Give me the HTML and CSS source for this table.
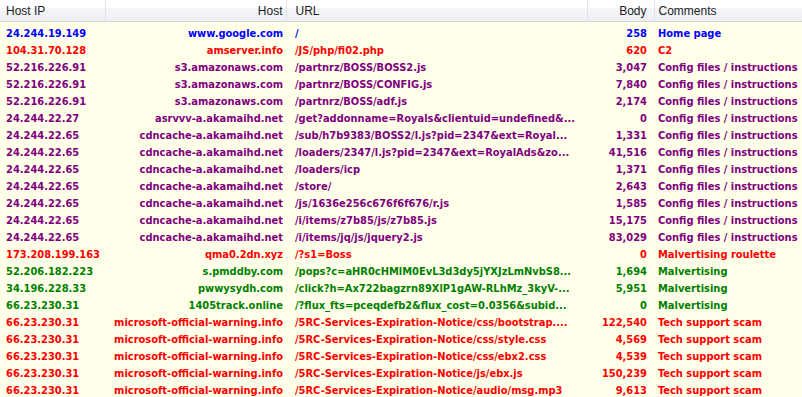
FILE: index.html
```html
<!DOCTYPE html>
<html>
<head>
<meta charset="utf-8">
<link rel="stylesheet" href="styles.css">
</head>
<body>
<table class="sessions">
<colgroup>
<col class="c-ip"><col class="c-host"><col class="c-url"><col class="c-body"><col class="c-com">
</colgroup>
<thead>
<tr><th class="ip">Host IP</th><th class="host">Host</th><th class="url">URL</th><th class="body">Body</th><th class="com">Comments</th></tr>
</thead>
<tbody>
<tr class="blue"><td class="ip">24.244.19.149</td><td class="host">www.google.com</td><td class="url">/</td><td class="body">258</td><td class="com">Home page</td></tr>
<tr class="red"><td class="ip">104.31.70.128</td><td class="host">amserver.info</td><td class="url">/JS/php/fi02.php</td><td class="body">620</td><td class="com">C2</td></tr>
<tr class="purple"><td class="ip">52.216.226.91</td><td class="host">s3.amazonaws.com</td><td class="url">/partnrz/BOSS/BOSS2.js</td><td class="body">3,047</td><td class="com">Config files / instructions</td></tr>
<tr class="purple"><td class="ip">52.216.226.91</td><td class="host">s3.amazonaws.com</td><td class="url">/partnrz/BOSS/CONFIG.js</td><td class="body">7,840</td><td class="com">Config files / instructions</td></tr>
<tr class="purple"><td class="ip">52.216.226.91</td><td class="host">s3.amazonaws.com</td><td class="url">/partnrz/BOSS/adf.js</td><td class="body">2,174</td><td class="com">Config files / instructions</td></tr>
<tr class="purple"><td class="ip">24.244.22.27</td><td class="host">asrvvv-a.akamaihd.net</td><td class="url">/get?addonname=Royals&amp;clientuid=undefined&amp;...</td><td class="body">0</td><td class="com">Config files / instructions</td></tr>
<tr class="purple"><td class="ip">24.244.22.65</td><td class="host">cdncache-a.akamaihd.net</td><td class="url">/sub/h7b9383/BOSS2/l.js?pid=2347&amp;ext=Royal...</td><td class="body">1,331</td><td class="com">Config files / instructions</td></tr>
<tr class="purple"><td class="ip">24.244.22.65</td><td class="host">cdncache-a.akamaihd.net</td><td class="url">/loaders/2347/l.js?pid=2347&amp;ext=RoyalAds&amp;zo...</td><td class="body">41,516</td><td class="com">Config files / instructions</td></tr>
<tr class="purple"><td class="ip">24.244.22.65</td><td class="host">cdncache-a.akamaihd.net</td><td class="url">/loaders/icp</td><td class="body">1,371</td><td class="com">Config files / instructions</td></tr>
<tr class="purple"><td class="ip">24.244.22.65</td><td class="host">cdncache-a.akamaihd.net</td><td class="url">/store/</td><td class="body">2,643</td><td class="com">Config files / instructions</td></tr>
<tr class="purple"><td class="ip">24.244.22.65</td><td class="host">cdncache-a.akamaihd.net</td><td class="url">/js/1636e256c676f6f676/r.js</td><td class="body">1,585</td><td class="com">Config files / instructions</td></tr>
<tr class="purple"><td class="ip">24.244.22.65</td><td class="host">cdncache-a.akamaihd.net</td><td class="url">/i/items/z7b85/js/z7b85.js</td><td class="body">15,175</td><td class="com">Config files / instructions</td></tr>
<tr class="purple"><td class="ip">24.244.22.65</td><td class="host">cdncache-a.akamaihd.net</td><td class="url">/i/items/jq/js/jquery2.js</td><td class="body">83,029</td><td class="com">Config files / instructions</td></tr>
<tr class="red"><td class="ip">173.208.199.163</td><td class="host">qma0.2dn.xyz</td><td class="url">/?s1=Boss</td><td class="body">0</td><td class="com">Malvertising roulette</td></tr>
<tr class="green"><td class="ip">52.206.182.223</td><td class="host">s.pmddby.com</td><td class="url">/pops?c=aHR0cHMlM0EvL3d3dy5jYXJzLmNvbS8...</td><td class="body">1,694</td><td class="com">Malvertising</td></tr>
<tr class="green"><td class="ip">34.196.228.33</td><td class="host">pwwysydh.com</td><td class="url">/click?h=Ax722bagzrn89XlP1gAW-RLhMz_3kyV-...</td><td class="body">5,951</td><td class="com">Malvertising</td></tr>
<tr class="green"><td class="ip">66.23.230.31</td><td class="host">1405track.online</td><td class="url">/?flux_fts=pceqdefb2&amp;flux_cost=0.0356&amp;subid...</td><td class="body">0</td><td class="com">Malvertising</td></tr>
<tr class="red"><td class="ip">66.23.230.31</td><td class="host">microsoft-official-warning.info</td><td class="url">/5RC-Services-Expiration-Notice/css/bootstrap....</td><td class="body">122,540</td><td class="com">Tech support scam</td></tr>
<tr class="red"><td class="ip">66.23.230.31</td><td class="host">microsoft-official-warning.info</td><td class="url">/5RC-Services-Expiration-Notice/css/style.css</td><td class="body">4,569</td><td class="com">Tech support scam</td></tr>
<tr class="red"><td class="ip">66.23.230.31</td><td class="host">microsoft-official-warning.info</td><td class="url">/5RC-Services-Expiration-Notice/css/ebx2.css</td><td class="body">4,539</td><td class="com">Tech support scam</td></tr>
<tr class="red"><td class="ip">66.23.230.31</td><td class="host">microsoft-official-warning.info</td><td class="url">/5RC-Services-Expiration-Notice/js/ebx.js</td><td class="body">150,239</td><td class="com">Tech support scam</td></tr>
<tr class="red"><td class="ip">66.23.230.31</td><td class="host">microsoft-official-warning.info</td><td class="url">/5RC-Services-Expiration-Notice/audio/msg.mp3</td><td class="body">9,613</td><td class="com">Tech support scam</td></tr>
</tbody>
</table>
</body>
</html>
```
FILE: styles.css
```css
html, body {
  margin: 0;
  padding: 0;
  background: #ffffea;
  overflow: hidden;
}
.sessions {
  width: 802px;
  table-layout: fixed;
  border-collapse: collapse;
  border-spacing: 0;
}
.c-ip { width: 105px; }
.c-host { width: 181px; }
.c-url { width: 301px; }
.c-body { width: 67px; }
.c-com { width: 148px; }
.sessions th {
  height: 18px;
  padding: 0 0 3px 0;
  font-family: "Liberation Sans", Arial, sans-serif;
  font-size: 12px;
  font-weight: normal;
  color: #1e1e1e;
  background: linear-gradient(#ffffff 0, #ffffff 8px, #f4f5f8 8px, #eff0f4 21px);
  border-bottom: 1px solid #d4d6dc;
  border-right: 1px solid #e1e3e8;
  white-space: nowrap;
  overflow: hidden;
  vertical-align: bottom;
  line-height: 14px;
}
.sessions th:last-child { border-right: none; }
.sessions td {
  height: 11px;
  padding: 6px 0 0 0;
  font-family: "DejaVu Sans Condensed", "DejaVu Sans", sans-serif;
  font-stretch: condensed;
  font-weight: bold;
  font-size: 11px;
  line-height: 11px;
  white-space: nowrap;
  vertical-align: top;
}
th.ip, td.ip { text-align: left; padding-left: 6px; }
th.host, td.host { text-align: right; padding-right: 3px; }
th.url, td.url { text-align: left; padding-left: 9px; }
th.body, td.body { text-align: right; padding-right: 7px; }
th.com, td.com { text-align: left; padding-left: 4px; }
.blue td { color: #0000ff; }
.red td { color: #ff0000; }
.purple td { color: #800080; }
.green td { color: #008000; }
```
